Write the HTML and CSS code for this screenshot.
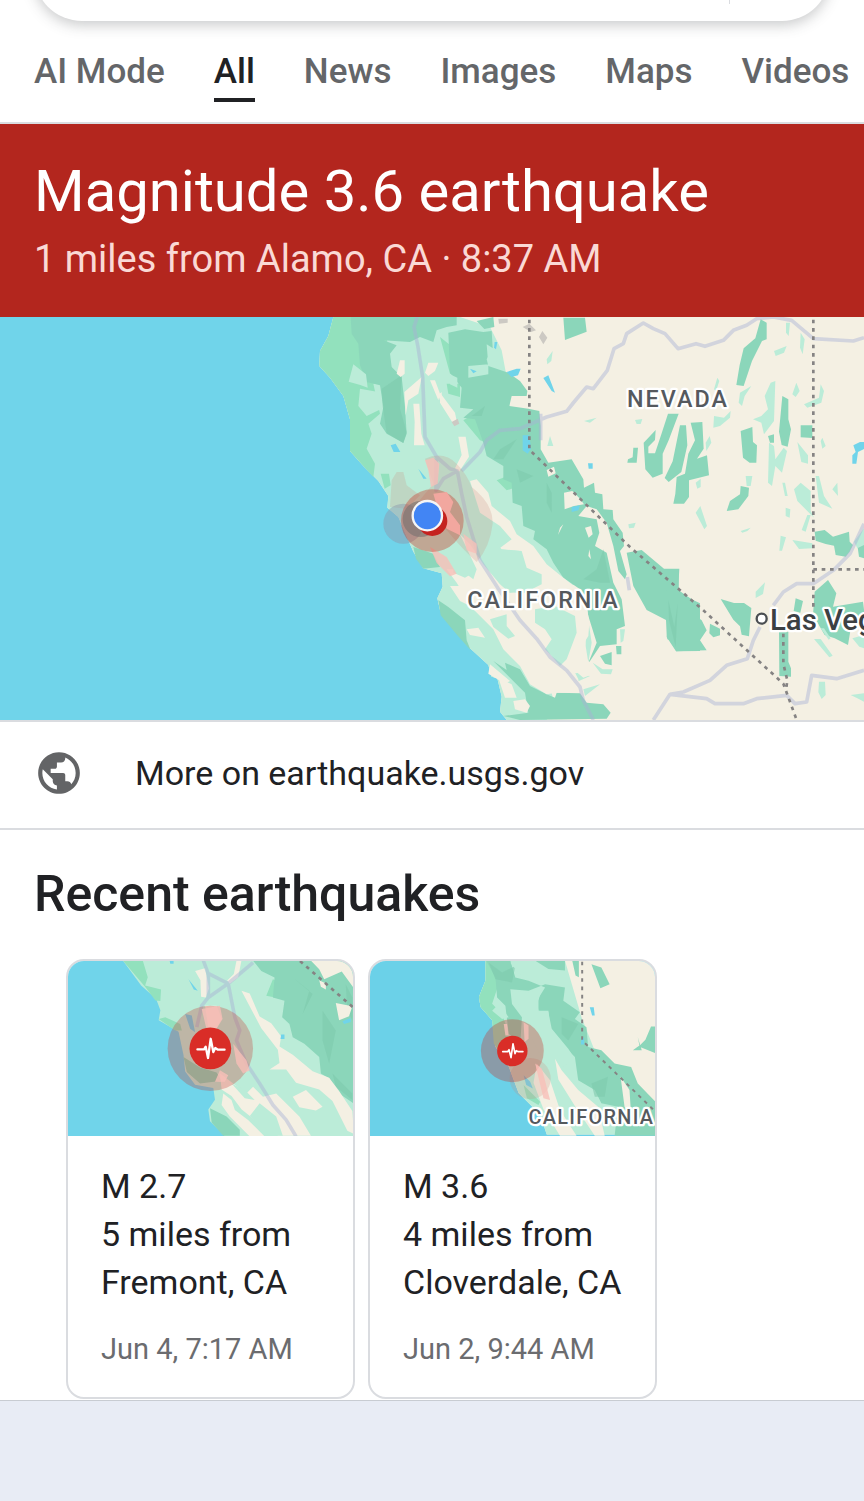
FILE: index.html
```html
<!DOCTYPE html>
<html lang="en">
<head>
  <meta charset="UTF-8">
  <meta name="viewport" content="width=device-width, initial-scale=1.0">
  <title>earthquake - Search</title>
  <link rel="stylesheet" href="styles.css">
</head>
<body>
  <header>
    <div class="search-box"><span class="divider"></span></div>
    <nav class="tabs">
      <a href="#">AI Mode</a>
      <a href="#" class="active">All</a>
      <a href="#">News</a>
      <a href="#">Images</a>
      <a href="#">Maps</a>
      <a href="#">Videos</a>
    </nav>
  </header>

  <main>
    <section class="alert">
      <h1>Magnitude 3.6 earthquake</h1>
      <p>1 miles from Alamo, CA · 8:37 AM</p>
    </section>

    <svg class="map" viewBox="0 0 2592 1209" role="img" aria-label="Map of California and Nevada">
      <rect class="water" width="2592" height="1209"/>
      <!-- land -->
      <path class="sand" d="M1000 0 985 57 960 102 958 147 990 182 1030 237 1050 307 1050 402 1090 447 1135 492 1165 537 1162 572 1195 600 1240 704 1270 754 1325 769 1328 809 1312 844 1320 879 1380 944 1410 994 1465 1044 1475 1079 1492 1084 1505 1139 1500 1184 1520 1209H2592V0Z"/>
      <path class="mint" d="M1000 0 985 57 960 102 958 147 990 182 1030 237 1050 307 1050 402 1090 447 1135 492 1165 537 1162 572 1195 600 1240 704 1270 754 1325 769 1328 809 1312 844 1320 879 1380 944 1410 994 1465 1044 1475 1079 1492 1084 1505 1139 1500 1184 1520 1209H1640L1660 1150 1640 1060 1500 900 1490 830 1640 820 1740 800 1680 700 1620 500 1530 280 1520 180 1505 100 1470 30 1380 0Z"/>
      <path class="lime" d="M1000 0 985 57 960 102 958 147 990 182 1030 237 1050 307 1050 402 1090 447 1120 480 1125 440 1100 395 1115 350 1105 320 1140 290 1120 200 1180 190 1150 0Z"/>
      <path class="lime" d="m1142 470 25 0 5 35-18 10zM1320 60l50 40 10 80-30-10zM1340 200l40 0 0 40-35-10zM1390 310l50-30 60 40 0 70-60-20zM1490 490l50-20 10 40-30 10z"/>
      <!-- forests, coast side -->
      <path class="green" d="M1052 0 1055 50 1075 80 1080 145 1100 195 1140 205 1150 270 1140 320 1160 350 1210 378 1220 350 1215 270 1205 180 1175 150 1170 110 1190 85 1150 70 1230 75 1260 60 1300 75 1310 40 1340 30 1370 25 1370 0Z"/>
      <path class="shade" d="m1145 215 60-40-5 100 20 70-10 33-50-30-12-80z"/>
      <path class="mint" d="m1060 142 38 30 5 40-22-8-35-10zM1080 215l55 10 10 50-45 22-25-30z"/>
      <!-- Sierra Nevada and central valley -->
      <g transform="translate(1320 -3)">
        <path class="green" d="M25 50 75 40 130 48 155 45 158 95 140 130 145 150 205 170 240 195 262 225 260 240 215 240 208 270 265 278 298 285 302 330 302 400 325 440 395 430 430 490 432 515 462 500 465 530 487 535 490 580 518 582 520 610 548 650 552 690 540 705 560 775 555 790 535 765 520 690 500 620 470 580 440 570 415 600 470 610 478 650 465 690 500 710 520 800 545 850 555 930 530 940 530 985 480 990 450 1035 445 1040 470 980 445 900 440 870 420 820 370 785 340 740 320 700 280 670 285 645 250 630 245 570 218 560 215 500 190 490 190 450 140 420 130 380 105 310 70 305 100 280 60 275 65 215 30 170Z"/>
        <path class="green" d="M560 710 605 702 672 758 718 758 714 830 780 862V1005L708 1006 705 976 682 970 678 912 620 882 580 810ZM110 15l50-12 3 30-30 6zM370 5h65l5 42-65 25zM160 1035 200 1062 195 1040 240 1060 270 1110 320 1135 345 1145 350 1130 420 1132 440 1160 490 1165 512 1190 500 1208 240 1212 190 1200 265 1190 255 1130ZM480 1020l35-12 0 40-20-5zM528 990h16v25h-14z"/>
        <path class="mint" d="m85 150 60-5 0 30-60 10zM30 175l22 10 0 30-22-10zM140 85l40 25 5 15-40 25zM330 360l10 30-18 0zM320 130l18-25-4 30-12 10zM432 315l38-10-20 15zM585 312l22-3-5 15-12 0zM440 880l15 100-10 60-8-50zM458 1040l30 20 30 0-5 15-30-2zM370 1075l50-5 30 10-45 20-30-10zM430 1120l50-15-45 35zM565 625l22-5-5 15-15 2zM540 940l15 0-5 35-8 5z"/>
        <path class="shade" d="m180 400 50-30-40 60-30 0zM230 460l50 20-40 20zM320 500l15 30 0 60-15-30zM490 700l20 100-30 0-50-10 40-30zM95 300l40-30-10 30z"/>
        <path class="sand" d="m372 530 25-5 20 20 15 20-30 5-28 10zM320 462l22-10 5 20-22 10zM435 635l18-5 5 25-12 10zM370 625l-16 32 6-22zM448 700l5 30-8-10z"/>
        <!-- valley floor -->
        <path class="sand" d="M90 495 110 490 145 530 155 570 210 615 230 655 280 690 320 745 370 785 415 820 440 870 448 920 445 960 420 1000 470 1070 430 1085 400 1060 390 1000 410 940 400 900 350 850 280 820 210 740 240 705 175 700 215 670 180 630 120 590Z"/>
        <path class="mint" d="m80 620 70 40 35 40 60 5 15 50 45 20 0 30-60 30-100-30-40-60-40-50z"/>
        <path class="sand" d="M60 655 90 685 130 745 180 805 230 850 290 900 350 990 390 1040 415 1090 420 1130 350 1130 320 1135 270 1105 240 1050 190 1000 160 940 100 880 50 800 20 760 60 760 100 790 110 760Z"/>
        <path class="mint" d="m285 880 60-10 60 30 5 50-30 80-20 20-25-30-20-20 20-30-20-30-30-20zM150 910l50-15 0 35 25 30-20 8-45-35zM40 770l0-60 30-10 30 70-25 15z"/>
        <path class="sand" d="m55 362 22 0 10 60-30 45-12-10 20-40zM0 230l45 60 5 25-12 5-38-60zM80 940l35-5 20 30-45-8zM150 1045l60 50-15 8-50-30zM175 1085l40 20 15 40-35 0zM220 1155l35-5 15 20-10 20-35-10zM30 810l30 0 60 60 0 15-60-30z"/>
      </g>
      <path class="green" d="M2000 758 2036 756 2036 820 2090 857 2068 882 2105 910 2120 940 2100 970 2120 1000 2028 1003 2000 960ZM2162 846l40 12 30 0 22 15-5 60-2 25-22-5-5-25-20-20zM2130 920l30 15 0 20-20 6-12-12z"/>
      <path class="shade" d="m2005 850 18 80 10-70-6 130-20-80z"/>
      <path class="sand" d="m1190 170 10-40 14 0 0 40-12 10zM1275 167l10-30 30 0-10 25-20 15zM1265 180l-10 50-30 20-8 45-4-70zM1240 260l18 0 6 90 10 35-32 0 2-70z"/>
      <path class="sand" d="m1290 190 15 0 15 40-5 20zM1315 235l10-10 0 40z"/>
      <path class="green" d="m1315 850 30 20 50 40 5 60 12 30-40-45-50-60zM1240 690l60 20 20 40-50 5-22-30z"/>
      <!-- Nevada and Arizona -->
      <g transform="translate(1722 -3)">
        <path class="green" d="m560 10 18 10 0 50-14 5-30 60-25 75-22-3 10-60 12-50 35-30zM282 293l32 0-30 80-18 40 0 60-30 12-22-25-5-80 36-38-2 30-20 20 0 20 20 0 20-60zM318 328l18 0 4 60-18 80-38 30-12-12 24-50zM350 320l35-2 4 80-20 30 30-10 6 60-60 15 0 50-15 20-32 0 6-30 4-50 25-10 10-60 20-40zM500 345l35-12 2 45 12 10-2 52-20 0-20-15zM625 240l18 10 0 60 8 30-10 52-18-5-8-40zM680 328h35v38l-35-2zM582 360l18-5 0 25-12 0zM500 510l25 5-2 25-30 40-35 5 10-30 30-20zM178 395l14 0-4 45-28 0 2-10 14-6z"/>
        <path class="mint" d="m600 105 38-15-8 20-25 10zM680 50l12 20-6 45-8-20zM636 20l12 0-4 40-8-10zM430 185l6 10-10 30-6-5zM498 230l34-20-20 30-8 30-10-10zM590 200l14-5-4 120-30 40-8-35-25-10 25-10 20-20-10-40zM655 235l12-35 10 25-12 18zM690 265l45-20 5-40 10 20-8 35-42 15zM420 300l30 5 20-20-2 20-30 25-20 5zM395 380l12-20 5 20-15 25zM585 380l15 10 4 40 25-35 10 10-15 65-20-20-10 60-12-10zM670 378l32 40 0 25-20-5zM660 520l20-20 30 25 0 60 10 20-50-50zM725 480l10 0 15 60 25 38-40-18zM775 520l15-20 2 40zM625 500l8 0 8 40-8 0zM515 480l20 0-5 30-12 0zM365 500l15-12 0 25-10 5zM365 590l14-20 20 60-8 10zM740 375l5-10 10 25-10 8zM635 575l14 5-2 25-12-5z"/>
        <path class="water" d="m838 388 20-10 14 0 0 20-20 10-5 35-12 0 0-25 10-10zM42 442h14v16h-12z"/>
      </g>
      <g transform="translate(1722 594)">
        <path class="green" d="m722 50 30-5 25 20 48-15 2 30 10 10-10 20-12 15-30-5-5-28-25-5-30-10zM722 230l40-35 25 40-10 40 90-15 5 40-40 30-10 60-40-20-30-10-35-60zM665 250l22 8-8 35-20-5zM615 350l28 0 0 90 8 20 0 25-35-2zM850 90l20-10 0 50-15-5z"/>
        <path class="mint" d="m700 0 10 0-15 50-12-5zM655 75l60 10 0 15-40 2zM620 62l16 5-12 40-8 0zM500 48l30-10-10 10-15 5zM545 230l28-28-6 35-22 12zM720 372l20 0 36 50-10 5zM840 80l30-40 0 50-20 10zM735 500l18 0 2 40-12 12-10-20zM830 540l40-5 0 25-20-10zM740 340l10 0 20 30-6 4zM835 370l36-10 0 40-15-5z"/>
      </g>
      <path class="water" d="m1630 183 15-8 20 52-10-5zM1520 165l30-10 12 0-8 20-20 5zM1568 355l20 0 5 40-10 15-15-10zM1172 385l15-5 14 25-20 0zM1255 455l25 30-10 0zM1484 75l8 0-4 22-6-5zM1410 155l20 8-10 6zM1715 570l25-5-5 15-20 5z"/>
      <path class="grey-town" d="m1568 30 20-10 20 20-15 5zM1617 60l10-18 15 20-12 20zM1355 315l18-10 5 15-15 8zM1495 5h28v12l-26 3z"/>
      <!-- roads -->
      <path class="road" d="M1252 0 1242 30 1254 90 1268 180 1275 360 1310 420 1350 455 1372 462 1385 530 1400 600 1440 730 1495 815 1560 910 1610 965 1650 1020 1700 1060 1740 1110 1750 1150 1780 1209M1372 462 1330 485 1308 520 1308 425M1385 462 1440 405 1460 370 1500 340 1560 335 1640 300 1700 283 1722 255 1760 210 1780 215 1822 160 1842 95 1870 80 1880 50 1930 18 1960 35 1995 50 2034 95 2088 80 2115 88 2170 70 2200 40 2240 25 2270 5 2320 0 2375 10 2440 65 2560 72 2592 62M1622 290V370M1960 1209 2010 1132 2120 1145 2145 1160 2230 1160 2270 1145 2360 1135 2385 1160 2420 1155 2435 1075 2510 1085 2592 1060M2010 1132 2050 1125 2130 1090 2180 1045 2242 1025 2260 970 2280 930M2320 865 2350 825 2390 800 2440 800 2500 760 2550 710 2592 620M1882 780 1888 820"/>
      <!-- state lines -->
      <path class="state" d="M1588 8V398L1890 690 2110 880 2350 1100 2390 1209M2440 8V870M2440 757H2592M2350 950V1040L2362 1090 2358 1120"/>
      <!-- shaken areas and epicentre -->
      <path class="felt" d="M1275 425Q1330 400 1370 440 1400 470 1415 510 1480 560 1478 620 1470 690 1430 735 1390 700 1340 640L1250 560 1300 500ZM1175 490l15-25 20 0 10 40 40 30-40 40-50-5z"/>
      <circle cx="1210" cy="620" r="60" fill="#8b9cb0" fill-opacity=".5"/>
      <path class="pink" d="M1275 430l25-8 18 18-5 60-20 10-8-50zM1290 690l50 30 30 50-20 8-40-40zM1390 650l40 30 0 30-30-10z"/>
      <circle class="quake-ring" cx="1297" cy="611" r="94"/>
      <path d="m1300 530 40-5 20 30-10 30 30 40 0 30-40-20-30-70z" fill="#f2a79f"/>
      <circle cx="1262" cy="606" r="54" fill="#77716f" fill-opacity=".6"/>
      <circle cx="1297" cy="612" r="45" fill="#c5221f"/>
      <circle cx="1282" cy="596" r="44" fill="#4285f4" stroke="#f5f5f5" stroke-width="7"/>
      <circle cx="2285" cy="905" r="15" fill="#fff" stroke="#4a4e52" stroke-width="7"/>
      <text class="map-label" x="1881" y="269">NEVADA</text>
      <text class="map-label" x="1402" y="873">CALIFORNIA</text>
      <text class="city" x="2310" y="938">Las Vegas</text>
    </svg>

    <a class="more-link" href="#">
      <svg viewBox="0 0 24 24" aria-hidden="true"><path d="M12 2C6.48 2 2 6.48 2 12s4.48 10 10 10 10-4.48 10-10S17.52 2 12 2zm-1 17.93c-3.95-.49-7-3.85-7-7.93 0-.62.08-1.21.21-1.79L9 15v1c0 1.1.9 2 2 2v1.93zm6.9-2.54c-.26-.81-1-1.39-1.9-1.39h-1v-3c0-.55-.45-1-1-1H8v-2h2c.55 0 1-.45 1-1V7h2c1.1 0 2-.9 2-2v-.41c2.93 1.19 5 4.06 5 7.41 0 2.08-.8 3.97-2.1 5.39z"/></svg>
      <span>More on earthquake.usgs.gov</span>
    </a>

    <section class="recent">
      <h2>Recent earthquakes</h2>
      <div class="cards">
        <a class="card" href="#">
          <svg viewBox="21 30 861 528" role="img" aria-label="Map near Fremont">
            <rect class="water" x="20" y="29" width="863" height="530"/>
            <path class="mint" d="m187 29 55 75 45 40 13 35-5 30 60 35 15 70 5 50 30 40 55 10 5 35-20 30 5 35 45 45H883V29Z"/>
            <path class="lime" d="m187 29 60 0 15 50-8 25 48 12-2 35-15-2-30-40zM295 205l20-5 45 20 5 20-20 0zM640 85l40 20-10 40-50-10z"/>
            <path class="green" d="M580 29H883V460L840 430 810 385 785 370 780 320 735 280 700 260 690 220 668 200 675 150 640 140 645 80 605 60ZM370 320l10 45 40 35 65-8-15-25-50-15zM450 475l50 25 40 40 0 18-50 0-35-40z"/>
            <path class="shade" d="m700 80 60 50-30 60 20-70zM790 180l40 60-20 100-20-70zM860 100l20 40 0 70-15-30zM820 370l60 60 0 20-50-40z"/>
            <path class="sand" d="M755 29H883V110L848 62 795 85 780 55ZM830 157l50 10-10 30-30 12zM780 88l20 10 0 18-15-8zM405 60l30-8 12 60-10 28-14-2-2-50zM530 29h15l-10 50-25 20-8-10 20-20zM545 120l25 8 30 70 35 20 30 40-5 30 40 25 60 50 50 20 30 40 40 60 5 70-20-10-45-90-40-35-70-20-30-40-50 0 30-20-5-40-50-65zM435 165h35l15 40-20 35-20-10zM480 370l80 60 20-20 30 30 40-10 70 70 30 50 5 8-100 0-20-40-40 0-50-40-30-40-30-20zM490 430l25 20 10 30 40 30 50 50-45 0-60-60-25-35zM700 440l40-20 50 50-20 12-50-10z"/>
            <path class="mint" d="m515 400 40 20 30 30-30-5zM600 460l50 40 20 58-40 0-60-60z"/>
            <path class="road" d="M430 29 445 70 445 140 425 165 410 230M445 140 505 98 580 35M440 65 505 98 525 200 540 240 530 270 560 340 600 400 640 465 680 510 710 560"/>
            <path class="water" d="m375 190 20 5 10 50-15-10zM385 85l28 35-12-4zM850 212l25-10 0 12-20 6zM665 252h10v14h-12zM328 29h12v9h-10z"/>
            <path class="state" d="m722 30 160 140"/>
            <circle cx="451" cy="294" r="129" fill="#c7352c" fill-opacity=".29"/>
            <path class="pink" d="m425 175 55-10 8 40-25 40-25-15zM520 280l40 50 10 30-20 10-20-30zM480 360l25 15-10 20-30 0z"/>
            <circle cx="451" cy="294" r="63" fill="#d92d27"/>
            <path class="pulse" d="M412 297h20l5-8 7 34 8-58 8 40 6-12 8 5h20"/>
          </svg>
          <div class="card-body">
            <p>M 2.7<br>5 miles from Fremont, CA</p>
            <time>Jun 4, 7:17 AM</time>
          </div>
        </a>
        <a class="card" href="#">
          <svg viewBox="21 30 861 528" role="img" aria-label="Map near Cloverdale">
            <rect class="water-alt" x="20" y="29" width="863" height="530"/>
            <path class="sand" d="m370 29 0 60-20 50 5 30 35 40 10 80 40 60 30 80 15 15 50 50 20 60H883V29Z"/>
            <path class="mint" d="m370 29 0 60-20 50 5 30 35 40 10 80 40 60 30 80 15 15 50 50 20 60H800L660 200 610 29Z"/>
            <path class="lime" d="m370 29 0 60-20 50 5 30 35 40 5 70 35 50 10-80-20-60-30-30 20-60 0-70zM485 405l50 50-5 10-35-20z"/>
            <path class="green" d="M372 29 400 80 405 140 430 165 440 250 475 280 480 200 450 160 445 115 500 120 550 100 610 110 605 150 655 185 640 205 675 230 680 290 720 300 760 340 810 350 830 400 883 455V558H760L770 470 720 460 700 420 650 390 640 320 610 290 565 230 560 180 530 180 525 150 550 110 500 90 460 80 445 29ZM520 29h90l0 30-50-5zM690 40l30 10 25 50-28 12zM632 29h20v50l-10-5zM870 228l13 0 0 80-50-20 20-20zM815 300l20-15-5-25 12 40z"/>
            <path class="shade" d="m380 35 40 30 40-20-10 50-50-10zM600 200l50 20-30 50-20-20zM690 400l50-20-10 60-30 0z"/>
            <path class="mint" d="m450 120 50 5 40-15-10 40 0 30 30 5 10 50 50 60 20 30-60 40-50-60-30-60-20-60zM445 35l50 0 0 25-20 12zM560 70l20-5 5 25-20 0zM390 180l20-20 30 40-20 5z"/>
            <path class="sand" d="m580 325 20 35 50 60 60 50 20 88-30 0-60-90-50-80zM525 340l40 50 30 90 50 78-50 0-50-80-30-80zM778 380l12 90 20 30-5-80z"/>
            <path class="water" d="m685 170 12 0 3 25-8 0zM660 262h8v20h-10zM485 375l20 20 8 20-20-10z"/>
            <path class="state thin" d="M662 32V270L883 485"/>
            <circle class="felt" cx="505" cy="385" r="62"/>
            <circle cx="451" cy="301" r="95" fill="#c7352c" fill-opacity=".34"/>
            <path class="pink" d="m485 215 15 10 0 40-12 10zM520 340l20 15 25 95-20-5zM425 220l10 0 5 35-10 0z"/>
            <circle cx="451" cy="302" r="46" fill="#d92d27"/>
            <path class="pulse small" d="M422 304h15l4-6 6 24 6-42 6 30 4-9 6 3h14"/>
            <text class="map-label" x="500" y="522">CALIFORNIA</text>
          </svg>
          <div class="card-body">
            <p>M 3.6<br>4 miles from Cloverdale, CA</p>
            <time>Jun 2, 9:44 AM</time>
          </div>
        </a>
      </div>
    </section>
  </main>
</body>
</html>
```
FILE: styles.css
```css
* {
  box-sizing: border-box;
}
body {
  margin: 0;
  min-height: 100vh;
  background: #e8ecf5;
  color: #202124;
  font-family: Roboto, Arial, sans-serif;
  overflow-x: hidden;
}
a {
  color: inherit;
  text-decoration: none;
}
h1, h2, p {
  margin: 0;
}
header {
  background: #fff;
  border-bottom: 2px solid #dadce0;
  overflow: hidden;
}
/* only the lower edge of the box shows once the page is scrolled */
.search-box {
  display: flex;
  justify-content: flex-end;
  align-items: flex-end;
  height: 100px;
  margin: -79px 34px 0;
  padding: 0 100px 17px 0;
  border-radius: 48px;
  box-shadow: 0 4px 14px rgba(60, 64, 67, 0.28);
}
.divider {
  width: 1px;
  height: 50px;
  background: #dadce0;
}
.tabs {
  display: flex;
  gap: 49px;
  padding: 29px 34px 20px;
  font-size: 35px;
  line-height: 44px;
  font-weight: 500;
  color: #646669;
  white-space: nowrap;
}
.tabs a {
  padding-bottom: 4px;
  border-bottom: 4px solid transparent;
}
.tabs .active {
  color: #202124;
  border-color: #202124;
}
.alert {
  padding: 33px 34px 34px;
  background: #b3261e;
  color: #fff;
}
.alert h1 {
  font-size: 58px;
  line-height: 68px;
  font-weight: 400;
}
.alert p {
  margin-top: 10px;
  font-size: 38px;
  line-height: 48px;
  color: #fad9d5;
}
.map {
  display: block;
  width: 100%;
  height: auto;
}
.more-link {
  display: flex;
  align-items: center;
  gap: 51px;
  padding: 25px 34px 29px;
  border-top: 2px solid #dadce0;
  border-bottom: 2px solid #dadce0;
  background: #fff;
  font-size: 34px;
  line-height: 52px;
}
.more-link svg {
  width: 50px;
  height: 50px;
  fill: #636466;
}
.recent {
  padding: 32px 34px 1px;
  background: #fff;
  border-bottom: 1px solid #c8ccd2;
}
.recent h2 {
  font-size: 50px;
  line-height: 64px;
  font-weight: 500;
}
.cards {
  display: flex;
  gap: 13px;
  margin: 33px 0 0 32px;
}
.card {
  width: 289px;
  border: 2px solid #dadce0;
  border-radius: 18px;
  overflow: hidden;
}
.card svg {
  display: block;
  width: 100%;
}
.card-body {
  padding: 26px 32px 28px 33px;
}
.card-body p {
  font-size: 34px;
  line-height: 48px;
}
.card-body time {
  display: block;
  margin-top: 23px;
  font-size: 29px;
  line-height: 40px;
  color: #6b6c6f;
}

/* map */
.water { fill: #70d4ea; }
.water-alt { fill: #6bd1e8; }
.sand { fill: #f4f0e3; }
.mint { fill: #bbecd8; }
.lime { fill: #92e1bd; }
.green { fill: #8bd6ba; }
.shade { fill: #7fc9ae; fill-opacity: 0.6; }
.grey-town { fill: #ccc9c3; }
.felt { fill: #c98a7c; fill-opacity: 0.22; }
.pink { fill: #f7bfb8; fill-opacity: 0.8; }
.quake-ring { fill: #c9422f; fill-opacity: 0.4; }
.road {
  fill: none;
  stroke: #a9b2d4;
  stroke-opacity: 0.45;
  stroke-width: 11;
  stroke-linejoin: round;
}
.state {
  fill: none;
  stroke: #858383;
  stroke-width: 8;
  stroke-dasharray: 11 14;
}
.state.thin {
  stroke-width: 6;
}
.pulse {
  fill: none;
  stroke: #fff;
  stroke-width: 7;
  stroke-linecap: round;
  stroke-linejoin: round;
}
.pulse.small {
  stroke-width: 5;
}
.map-label, .city {
  font-weight: 500;
  fill: #55595e;
  stroke: #fff;
  stroke-width: 14;
  stroke-linejoin: round;
  paint-order: stroke;
}
.map-label {
  font-size: 70px;
  letter-spacing: 6px;
}
.card .map-label {
  font-size: 60px;
  letter-spacing: 4px;
}
.city {
  font-size: 88px;
  fill: #3c4043;
}
```
